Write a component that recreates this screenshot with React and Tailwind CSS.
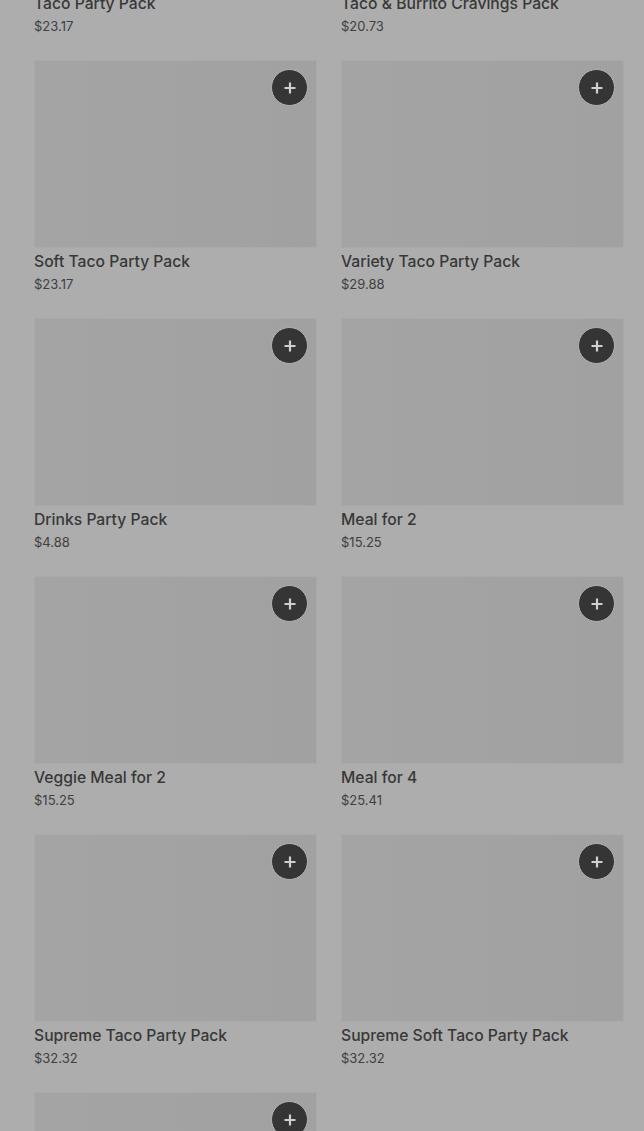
import React from 'react'

const items = [
  { name: 'Taco Party Pack', price: '$23.17' },
  { name: 'Taco & Burrito Cravings Pack', price: '$20.73' },
  { name: 'Soft Taco Party Pack', price: '$23.17' },
  { name: 'Variety Taco Party Pack', price: '$29.88' },
  { name: 'Drinks Party Pack', price: '$4.88' },
  { name: 'Meal for 2', price: '$15.25' },
  { name: 'Veggie Meal for 2', price: '$15.25' },
  { name: 'Meal for 4', price: '$25.41' },
  { name: 'Supreme Taco Party Pack', price: '$32.32' },
  { name: 'Supreme Soft Taco Party Pack', price: '$32.32' },
  { name: 'Cravings Value Meal', price: '$9.99' },
]

const ProductCard = ({ item }) => {
  return (
    <div className='flex flex-col'>
      <div className='relative h-[188px] border border-[#a9a9a9] bg-gradient-to-r from-[#a4a4a4] to-[#a1a1a1]'>
        <button className='absolute right-[8px] top-[8px] flex h-[37px] w-[37px] items-center justify-center rounded-full border border-[#b4b4b4] bg-[#353535]'>
          <svg width='14' height='14' viewBox='0 0 14 14'>
            <path d='M7 1.5v11M1.5 7h11' stroke='#cfcfcf' strokeWidth='2.2' />
          </svg>
        </button>
      </div>
      <p className='mt-[2px] text-[15.7px] font-medium leading-6 text-[#383838]'>{item.name}</p>
      <p className='text-[13px] leading-5 text-[#404040]'>{item.price}</p>
    </div>
  )
}

const App = () => {
  return (
    <div className='h-[1131px] overflow-hidden bg-[#adadad]' style={{ fontFamily: 'Inter, "Noto Sans", sans-serif' }}>
      <div className='-mt-[198px] grid grid-cols-2 gap-x-6 gap-y-[24px] pl-[34px] pr-[20px]'>
        {items.map((item) => (
          <ProductCard key={item.name} item={item} />
        ))}
      </div>
    </div>
  )
}

export default App
